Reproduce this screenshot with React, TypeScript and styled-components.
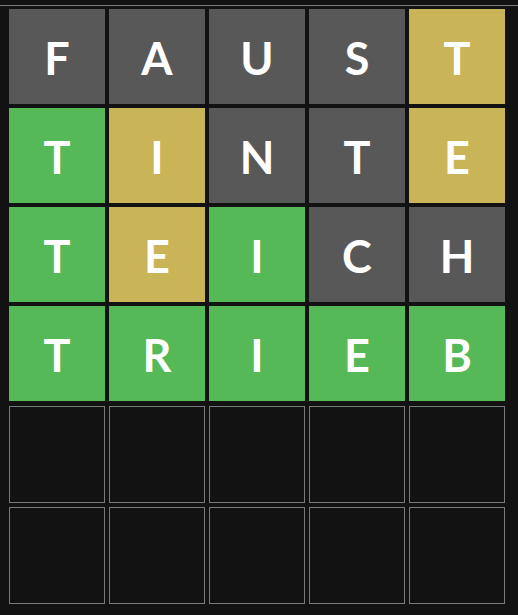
import styled, { createGlobalStyle } from "styled-components"

type Mark = "absent" | "present" | "correct" | "empty"

const guesses: { letter: string; mark: Mark }[][] = [
  [
    { letter: "F", mark: "absent" },
    { letter: "A", mark: "absent" },
    { letter: "U", mark: "absent" },
    { letter: "S", mark: "absent" },
    { letter: "T", mark: "present" },
  ],
  [
    { letter: "T", mark: "correct" },
    { letter: "I", mark: "present" },
    { letter: "N", mark: "absent" },
    { letter: "T", mark: "absent" },
    { letter: "E", mark: "present" },
  ],
  [
    { letter: "T", mark: "correct" },
    { letter: "E", mark: "present" },
    { letter: "I", mark: "correct" },
    { letter: "C", mark: "absent" },
    { letter: "H", mark: "absent" },
  ],
  [
    { letter: "T", mark: "correct" },
    { letter: "R", mark: "correct" },
    { letter: "I", mark: "correct" },
    { letter: "E", mark: "correct" },
    { letter: "B", mark: "correct" },
  ],
]

const ROWS = 6
const COLS = 5

const colors: Record<Mark, string> = {
  absent: "#585858",
  present: "#c9b458",
  correct: "#55b957",
  empty: "#121212",
}

const App = () => {
  const rows = Array.from({ length: ROWS }, (_, r) =>
    Array.from({ length: COLS }, (_, c) => guesses[r]?.[c] ?? { letter: "", mark: "empty" as Mark })
  )

  return (
    <Page>
      <Global />
      <Header />
      <Board>
        {rows.map((row, r) => (
          // the first unplayed row sits a pixel lower than the played ones
          <Row key={r} $first={r === guesses.length}>
            {row.map((tile, c) => (
              <Tile key={c} $mark={tile.mark}>
                {tile.letter}
              </Tile>
            ))}
          </Row>
        ))}
      </Board>
    </Page>
  )
}

export default App

const Global = createGlobalStyle`
body {
  margin: 0;
  background: #121212;
}
`

const Page = styled.div`
  background: #121212;
  min-height: 615px;
`

const Header = styled.div`
  height: 5px;
  border-bottom: 1px solid #7a7a7a;
`

const Board = styled.div`
  display: flex;
  flex-direction: column;
  gap: 4px;
  padding: 3px 0 0 9px;
`

const Row = styled.div<{ $first: boolean }>`
  display: grid;
  grid-template-columns: repeat(5, 96px);
  column-gap: 4px;
  margin-top: ${(p) => (p.$first ? "1px" : "0")};
`

const Tile = styled.div<{ $mark: Mark }>`
  box-sizing: border-box;
  height: ${(p) => (p.$mark === "empty" ? "97px" : "95px")};
  background: ${(p) => colors[p.$mark]};
  border: ${(p) => (p.$mark === "empty" ? "1px solid #7a7a7a" : "none")};
  display: flex;
  align-items: center;
  justify-content: center;
  padding-top: 2px;
  color: #fff;
  font-family: Lato, "Noto Sans", sans-serif;
  font-weight: 700;
  font-size: 45px;
  text-transform: uppercase;
`
